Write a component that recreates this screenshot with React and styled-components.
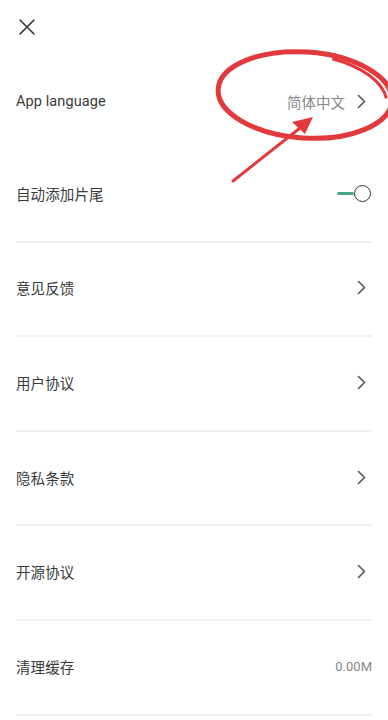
import React from 'react';
import styled, { createGlobalStyle } from 'styled-components';

const GlobalStyle = createGlobalStyle`
  html, body {
    margin: 0;
    padding: 0;
    background: #fff;
  }
  body {
    font-family: Roboto, "Noto Sans CJK SC", sans-serif;
  }
`;

const Page = styled.div`
  position: relative;
  width: 388px;
  height: 720px;
  overflow: hidden;
  background: #fff;
`;

const Header = styled.div`
  height: 54px;
  display: flex;
  align-items: center;
  padding-left: 18px;
`;

const List = styled.div`
  padding: 0 16px;
`;

const Row = styled.div`
  box-sizing: border-box;
  height: ${p => (p.$first ? '94px' : '94.6px')};
  display: flex;
  align-items: center;
  justify-content: space-between;
  border-bottom: ${p => (p.$divider ? '2px solid #f0f0f0' : '0')};
  padding-bottom: ${p => (p.$divider ? '2px' : '0')};
`;

const Label = styled.span`
  font-size: 14.5px;
  color: #3a3a3a;
  letter-spacing: 0.1px;
`;

const Right = styled.div`
  display: flex;
  align-items: center;
  gap: 12px;
`;

const Value = styled.span`
  font-size: ${p => (p.$small ? '13px' : '14.5px')};
  color: #888;
`;

const ChevronBox = styled.span`
  display: flex;
  margin-right: 6px;
`;

const ToggleWrap = styled.div`
  display: flex;
  align-items: center;
  margin-right: 1px;
`;

const Track = styled.div`
  width: 17px;
  height: 3px;
  background: #4aa888;
  border-radius: 2px;
`;

const Knob = styled.div`
  width: 15px;
  height: 15px;
  border: 1.6px solid #333;
  border-radius: 50%;
  background: #fff;
`;

const Overlay = styled.svg`
  position: absolute;
  left: 0;
  top: 0;
  pointer-events: none;
`;

const Chevron = () => (
  <ChevronBox>
    <svg width="9" height="15" viewBox="0 0 9 15">
      <path d="M1.5 1.5 L7.5 7.5 L1.5 13.5" fill="none" stroke="#555" strokeWidth="1.6" strokeLinecap="round" strokeLinejoin="round" />
    </svg>
  </ChevronBox>
);

const CloseIcon = () => (
  <svg width="18" height="18" viewBox="0 0 18 18">
    <path d="M2 2 L16 16 M16 2 L2 16" stroke="#333" strokeWidth="1.6" strokeLinecap="round" />
  </svg>
);

const Toggle = () => (
  <ToggleWrap>
    <Track />
    <Knob />
  </ToggleWrap>
);

const items = [
  { label: '意见反馈', chevron: true },
  { label: '用户协议', chevron: true },
  { label: '隐私条款', chevron: true },
  { label: '开源协议', chevron: true },
  { label: '清理缓存', value: '0.00M' },
];

export default function App() {
  return (
    <Page>
      <GlobalStyle />
      <Header>
        <CloseIcon />
      </Header>
      <List>
        <Row $first>
          <Label>App language</Label>
          <Right>
            <Value>简体中文</Value>
            <Chevron />
          </Right>
        </Row>
        <Row $divider>
          <Label>自动添加片尾</Label>
          <Toggle />
        </Row>
        {items.map(item => (
          <Row key={item.label} $divider>
            <Label>{item.label}</Label>
            {item.chevron ? <Chevron /> : <Value $small>{item.value}</Value>}
          </Row>
        ))}
      </List>
      {/* red annotation drawn over the screenshot */}
      <Overlay width="388" height="720" viewBox="0 0 388 720">
        <ellipse
          cx="305"
          cy="95"
          rx="87"
          ry="43"
          transform="rotate(4 305 95)"
          fill="none"
          stroke="#e23a3c"
          strokeWidth="5"
        />
        <ellipse
          cx="303"
          cy="96"
          rx="84"
          ry="42"
          transform="rotate(6 303 96)"
          fill="none"
          stroke="#e23a3c"
          strokeWidth="3"
          strokeDasharray="70 600"
          strokeDashoffset="-330"
        />
        <path d="M233 181 L300 128" stroke="#e23a3c" strokeWidth="3" strokeLinecap="round" />
        <polygon points="313,117 292,122 305,134" fill="#e23a3c" />
      </Overlay>
    </Page>
  );
}
